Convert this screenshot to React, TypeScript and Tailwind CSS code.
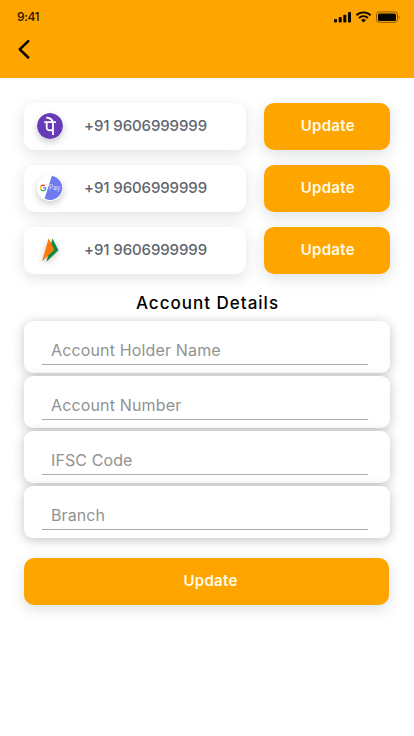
import React from "react";

function StatusBar() {
  return (
    <div className="flex h-[33px] items-center justify-between pl-[17px] pr-[14px]">
      <span className="text-[12px] font-medium leading-4 tracking-[-0.4px] text-[#241800]">9:41</span>
      <svg width="68" height="14" viewBox="0 0 68 14" fill="#0a0700">
        <rect x="2" y="9" width="3" height="3.6" rx="0.8" />
        <rect x="6.7" y="7" width="3" height="5.6" rx="0.8" />
        <rect x="11.3" y="4.8" width="3" height="7.8" rx="0.8" />
        <rect x="16" y="2" width="3" height="10.6" rx="0.8" />
        <g fill="none" stroke="#0a0700" strokeWidth="1.9">
          <path d="M24.4 5.3a10.2 10.2 0 0 1 14.2 0" />
          <path d="M27 8a6.4 6.4 0 0 1 9 0" />
        </g>
        <path d="M31.5 12.6l-2.5-2.5a3.7 3.7 0 0 1 5 0z" />
        <rect x="44.5" y="1.9" width="21" height="10.5" rx="2.8" fill="none" stroke="#0a0700" strokeOpacity="0.45" />
        <rect x="46" y="3.4" width="18" height="7.5" rx="1.5" />
        <path d="M66.7 5.5v3.3c1.2-.5 1.2-2.8 0-3.3z" opacity="0.5" />
      </svg>
    </div>
  );
}

function PhonePeLogo() {
  return (
    <svg width="26" height="26" viewBox="0 0 26 26" className="rounded-full shadow-[0_3px_7px_rgba(0,0,0,0.22)]">
      <circle cx="13" cy="13" r="13" fill="#673ab7" />
      <g fill="none" stroke="#fff" strokeWidth="1.8">
        <path d="M7.2 9.1h11.7" />
        <path d="M9.7 9.2v5.2c0 3 2.8 3.8 6.3 2.2" />
        <path d="M16 9v13" />
        <path d="M9.2 4.6l2 .2c2.3.4 4 2 4.7 4.2" />
      </g>
    </svg>
  );
}

function GooglePayLogo() {
  return (
    <svg width="26" height="26" viewBox="0 0 26 26" className="rounded-full shadow-[0_3px_7px_rgba(0,0,0,0.2)]">
      <circle cx="13" cy="13" r="12.5" fill="#fff" />
      <path d="M14.8 1A12 12 0 1 1 7.6 23.5z" fill="#6e7bed" />
      <g fill="none" strokeWidth="1.3">
        <path d="M8 10.8a2.7 2.7 0 0 0-4.2.6" stroke="#ea4335" />
        <path d="M3.8 11.4a2.8 2.8 0 0 0 .1 3" stroke="#fbbc05" />
        <path d="M3.9 14.4a2.7 2.7 0 0 0 3.9.8" stroke="#34a853" />
        <path d="M7.8 15.2c.7-.5 1-1.2.9-2.3H6.2" stroke="#4285f4" />
      </g>
      <text x="12" y="15.3" fontSize="7" fill="#dce2ff" fontFamily="Inter" textLength="11.5" lengthAdjust="spacingAndGlyphs">Pay</text>
    </svg>
  );
}

function BhimLogo() {
  return (
    <svg width="26" height="26" viewBox="0 0 26 26" className="drop-shadow-[0_2px_3px_rgba(0,0,0,0.22)]">
      <path d="M15.4 1.6L21.5 13.3 9.4 24.8z" fill="#128842" />
      <path d="M11.7 1.2L17.2 12.8 5 24.5z" fill="#ff7909" />
    </svg>
  );
}

function UpdateButton({ size, label }: { size: string; label: string }) {
  return (
    <button
      className={`${size} flex h-[47px] items-center justify-center rounded-[10px] bg-[#ffa500] shadow-[0_4px_14px_rgba(60,75,85,0.18)]`}
    >
      <span className={`${label} text-[15px] font-semibold leading-5 text-[#fffbe9]`}>Update</span>
    </button>
  );
}

const wallets = [
  { name: "phonepe", logo: <PhonePeLogo /> },
  { name: "gpay", logo: <GooglePayLogo /> },
  { name: "bhim", logo: <BhimLogo /> },
];

const fields = [
  { label: "Account Holder Name", spacing: "tracking-[0.15px]" },
  { label: "Account Number", spacing: "tracking-[0.15px]" },
  { label: "IFSC Code", spacing: "tracking-[0.1px]" },
  { label: "Branch", spacing: "tracking-[0.1px]" },
];

export default function App() {
  return (
    <main className="h-[736px] w-[414px] overflow-hidden bg-white font-['Inter','Liberation_Sans',sans-serif]">
      <header className="h-[78px] bg-[#ffa500]">
        <StatusBar />
        <button aria-label="Back" className="ml-[17px] mt-[6px] block">
          <svg width="14" height="20" viewBox="0 0 14 20" fill="none" stroke="#000" strokeWidth="2.5" strokeLinecap="round" strokeLinejoin="round">
            <path d="M11.2 2.2L2.8 10.3l8.4 8.2" />
          </svg>
        </button>
      </header>

      <section className="flex flex-col gap-[15px] pl-6 pr-6 pt-[24.5px]">
        {wallets.map((w) => (
          <div key={w.name} className="flex justify-between">
            <div className="flex h-[47px] w-[222px] items-center rounded-[10px] bg-white pl-[13px] shadow-[0_4px_14px_rgba(60,75,85,0.16)]">
              {w.logo}
              <span className="ml-[21px] whitespace-nowrap text-[15px] font-medium leading-5 tracking-[-0.1px] text-[#5f666d]">+91 9606999999</span>
            </div>
            <UpdateButton size="w-[126.5px]" label="pl-[2px] tracking-[0.3px]" />
          </div>
        ))}
      </section>

      <h2 className="mt-[17px] pl-[1px] text-center text-[17px] font-medium leading-6 tracking-[1px] text-black">Account Details</h2>

      <form className="mt-[6.5px] flex flex-col gap-[3px] px-6">
        {fields.map((f) => (
          <div key={f.label} className="h-[52px] rounded-[9px] bg-white px-[18px] pt-[17px] shadow-[0_2px_12px_rgba(0,0,0,0.24)]">
            <div className="mr-[4px] h-[27px] border-b border-[#aaaaaa] pl-[9px]">
              <span className={`${f.spacing} block text-[16px] leading-6 text-[#929292]`}>{f.label}</span>
            </div>
          </div>
        ))}
      </form>

      <div className="mt-[19.5px] pl-6 pr-[25px]">
        <UpdateButton size="w-full" label="pl-[8px] tracking-[0.3px]" />
      </div>
    </main>
  );
}
